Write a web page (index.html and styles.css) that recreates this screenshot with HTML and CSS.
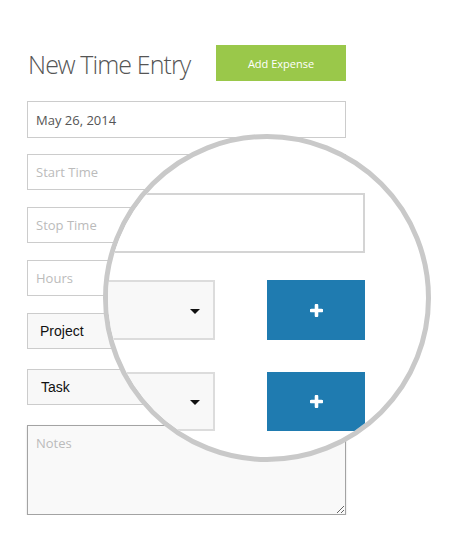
FILE: index.html
```html
<!DOCTYPE html>
<html>

<head>
    <title>New Time Entry</title>
    <meta name="viewport" content="width=device-width, initial-scale=1">
    <link rel="stylesheet" href="styles.css">
</head>

<body>
    <div id="form">
        <div class="form-header">
            <h1>New Time Entry</h1>
            <button class="expense-button">Add Expense</button>
        </div>

        <input type="text" class="field" value="May 26, 2014">
        <input type="text" class="field" placeholder="Start Time">
        <input type="text" class="field" placeholder="Stop Time">
        <input type="text" class="field" placeholder="Hours">

        <div class="select-row">
            <div class="select">Project</div>
        </div>
        <div class="select-row task-row">
            <div class="select">Task</div>
        </div>

        <textarea class="notes" placeholder="Notes"></textarea>
    </div>

    <!-- magnifier over the form -->
    <div class="lens">
        <div class="lens-view">
            <div class="zoom-field"></div>

            <div class="zoom-row">
                <div class="zoom-select"><span class="caret"></span></div>
                <div class="zoom-button">
                    <svg width="13" height="13" viewBox="0 0 13 13">
                        <path d="M6.5 1.5v10M1.5 6.5h10" stroke="#fff" stroke-width="3.6" stroke-linecap="round" />
                    </svg>
                </div>
            </div>

            <div class="zoom-row second">
                <div class="zoom-select"><span class="caret"></span></div>
                <div class="zoom-button">
                    <svg width="13" height="13" viewBox="0 0 13 13">
                        <path d="M6.5 1.5v10M1.5 6.5h10" stroke="#fff" stroke-width="3.6" stroke-linecap="round" />
                    </svg>
                </div>
            </div>
        </div>
    </div>
</body>

</html>
```

FILE: styles.css
```css
:root {
    --text-color: #4a4a4a;
    --field-border: #cccccc;
    --placeholder: #bbbbbb;
    --green: #9ac84a;
    --blue: #1f7bb0;
    --lens-border: #c9c9c9;
}

body {
    margin: 0;
    padding: 0;
    background-color: #ffffff;
    font-family: "Open Sans", Arial, sans-serif;
    color: var(--text-color);
}

#form {
    width: 319px;
    padding: 45px 0 0 27px;
    display: flex;
    flex-direction: column;
}

.form-header {
    display: flex;
    justify-content: space-between;
    align-items: center;
    height: 36px;
    margin-bottom: 20px;
}

.form-header h1 {
    margin: 0 0 0 1px;
    font-family: "Open Sans Light", "Open Sans", Arial, sans-serif;
    font-size: 25px;
    font-weight: 300;
    letter-spacing: -0.9px;
    color: #555;
    line-height: 36px;
    padding-top: 2px;
}

.expense-button {
    width: 130px;
    height: 36px;
    border: none;
    background-color: var(--green);
    color: #ffffff;
    font-family: "Open Sans", Arial, sans-serif;
    font-size: 11px;
    padding: 0;
}

.field {
    box-sizing: border-box;
    width: 319px;
    height: 36px;
    margin: 0 0 17px 0;
    padding: 0 8px;
    border: 1px solid var(--field-border);
    background-color: #ffffff;
    font-family: "Open Sans", Arial, sans-serif;
    font-size: 13px;
    color: #555;
    outline: none;
}

.field:first-of-type {
    height: 37px;
    margin-bottom: 16px;
}

.field::placeholder {
    color: var(--placeholder);
}

.select-row {
    display: flex;
    margin-bottom: 20px;
}

.select {
    box-sizing: border-box;
    width: 190px;
    height: 36px;
    padding: 0 12px;
    border: 1px solid var(--field-border);
    background-color: #f8f8f8;
    font-family: "Liberation Sans", Arial, sans-serif;
    font-size: 14px;
    color: #111;
    display: flex;
    align-items: center;
}

.task-row .select {
    padding-left: 13px;
}

.notes {
    box-sizing: border-box;
    width: 319px;
    height: 90px;
    margin: 0;
    padding: 8px 8px;
    border: 1px solid #a3a3a3;
    box-shadow: 0 1px 2px rgba(0, 0, 0, 0.15);
    background-color: #f9f9f9;
    font-family: "Open Sans", Arial, sans-serif;
    font-size: 13px;
    resize: vertical;
    outline: none;
}

.notes::placeholder {
    color: var(--placeholder);
}

/* magnifier */

.lens {
    position: absolute;
    left: 103px;
    top: 134px;
    width: 318px;
    height: 318px;
    border: 5px solid var(--lens-border);
    border-radius: 50%;
    background-color: #ffffff;
    overflow: hidden;
}

.lens-view {
    width: 307px;
    margin-left: -50px;
    padding-top: 54px;
}

.zoom-field {
    box-sizing: border-box;
    height: 60px;
    border: 2px solid #d4d4d4;
    background-color: #ffffff;
}

.zoom-row {
    display: flex;
    justify-content: space-between;
    height: 60px;
    margin-top: 27px;
}

.zoom-row.second {
    height: 59px;
    margin-top: 32px;
}

.zoom-select {
    box-sizing: border-box;
    width: 157px;
    border: 2px solid #dcdcdc;
    background-color: #f8f8f8;
    display: flex;
    align-items: center;
    justify-content: flex-end;
    padding-right: 13px;
}

.caret {
    width: 0;
    height: 0;
    border-left: 5px solid transparent;
    border-right: 5px solid transparent;
    border-top: 5px solid #111;
    margin-top: 2px;
}

.zoom-button {
    width: 98px;
    background-color: var(--blue);
    display: flex;
    align-items: center;
    justify-content: center;
}

.zoom-button svg {
    display: block;
}
```
